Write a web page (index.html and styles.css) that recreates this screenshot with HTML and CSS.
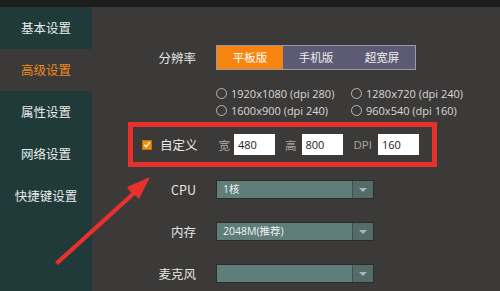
FILE: index.html
```html
<!DOCTYPE html>
<html>
<head>
<meta charset="utf-8">
<link rel="stylesheet" href="styles.css">
</head>
<body>
<div class="topbar"></div>
<div class="app">
  <nav class="sidebar">
    <div class="nav-item">基本设置</div>
    <div class="nav-item active">高级设置</div>
    <div class="nav-item">属性设置</div>
    <div class="nav-item">网络设置</div>
    <div class="nav-item">快捷键设置</div>
  </nav>
  <main class="main">
    <div class="row res-row">
      <div class="label">分辨率</div>
      <div class="seg">
        <div class="seg-btn on">平板版</div>
        <div class="seg-btn">手机版</div>
        <div class="seg-btn">超宽屏</div>
      </div>
    </div>
    <div class="radios">
      <div class="radio"><span class="circle"></span>1920x1080 (dpi 280)</div>
      <div class="radio"><span class="circle"></span>1280x720 (dpi 240)</div>
      <div class="radio"><span class="circle"></span>1600x900 (dpi 240)</div>
      <div class="radio"><span class="circle"></span>960x540 (dpi 160)</div>
    </div>
    <div class="custom">
      <span class="check"><svg width="9" height="9" viewBox="0 0 9 9"><path d="M1.5 4.8 L3.6 7 L7.6 1.8" fill="none" stroke="#fff6d8" stroke-width="1.4"/></svg></span>
      <span class="custom-label">自定义</span>
      <span class="field-label w">宽</span><span class="input">480</span>
      <span class="field-label h">高</span><span class="input">800</span>
      <span class="field-label d">DPI</span><span class="input">160</span>
    </div>
    <div class="row sel-row first">
      <div class="label">CPU</div>
      <div class="select"><span class="sel-text">1核</span><span class="sel-arrow"></span></div>
    </div>
    <div class="row sel-row">
      <div class="label">内存</div>
      <div class="select"><span class="sel-text">2048M(推荐)</span><span class="sel-arrow"></span></div>
    </div>
    <div class="row sel-row">
      <div class="label">麦克风</div>
      <div class="select"><span class="sel-text"></span><span class="sel-arrow"></span></div>
    </div>
  </main>
</div>
<svg class="pointer" width="500" height="291" viewBox="0 0 500 291">
  <path d="M55 262 L131 193 L127 187 L150 177 L139 199 L135 195 L58 265 Z" fill="#e8302e"/>
</svg>
</body>
</html>
```
FILE: styles.css
```css
* { box-sizing: border-box; }
html, body {
  margin: 0;
  padding: 0;
  width: 500px;
  height: 291px;
  overflow: hidden;
  background: #3b3a38;
  font-family: "Noto Sans CJK SC", "Noto Sans", sans-serif;
  color: #e6e6e6;
}
.topbar {
  height: 7px;
  background: #1d1d1e;
}
.app {
  display: flex;
  height: 284px;
}
.sidebar {
  width: 92px;
  background: #1f3a39;
  display: flex;
  flex-direction: column;
}
.nav-item {
  height: 42px;
  line-height: 42px;
  text-align: center;
  font-size: 12.5px;
  color: #e8ecec;
}
.nav-item.active {
  background: #3b3a38;
  color: #f08a1c;
}
.main {
  flex: 1;
  display: flex;
  flex-direction: column;
}
.row {
  display: flex;
  align-items: center;
}
.label {
  width: 104px;
  text-align: right;
  font-size: 12.5px;
  color: #e6e6e6;
  margin-right: 20px;
}
.res-row {
  margin-top: 38px;
}
.seg {
  display: flex;
  height: 25px;
  border: 1px solid #9a99a8;
  background: #5c5a74;
}
.seg-btn {
  width: 66px;
  line-height: 23px;
  text-align: center;
  font-size: 11.5px;
  color: #eeeeee;
}
.seg-btn.on {
  background: #f7840f;
  color: #fff;
}
.radios {
  margin-left: 124px;
  margin-top: 15px;
  display: grid;
  grid-template-columns: 135px 130px;
  row-gap: 0;
  font-family: "Open Sans", "Noto Sans", sans-serif;
  font-size: 11px;
  color: #d8d8d8;
}
.radio {
  display: flex;
  align-items: center;
  height: 17px;
}
.circle {
  width: 11px;
  height: 11px;
  border: 1px solid #b8b8b8;
  border-radius: 50%;
  margin-right: 4px;
}
.custom {
  margin-left: 36px;
  margin-top: 3px;
  width: 309px;
  height: 45px;
  border: 5px solid #e8302e;
  display: flex;
  align-items: center;
  padding-left: 9px;
  font-size: 12.5px;
}
.check {
  width: 10px;
  height: 10px;
  background: #e8901a;
  border: 1px solid #c27010;
  display: flex;
  align-items: center;
  justify-content: center;
}
.custom-label {
  margin-left: 8px;
  color: #ececec;
}
.field-label {
  color: #a8a8a8;
  font-size: 11.5px;
}
.field-label.w { margin-left: 21px; margin-right: 4px; }
.field-label.h { margin-left: 10px; margin-right: 5px; }
.field-label.d { margin-left: 11px; margin-right: 6px; font-family: "Open Sans", sans-serif; }
.input {
  width: 41px;
  height: 21px;
  background: #ffffff;
  color: #222;
  font-family: "Open Sans", "Noto Sans", sans-serif;
  font-size: 11px;
  line-height: 21px;
  padding-left: 4px;
}
.sel-row.first {
  margin-top: 13px;
}
.sel-row + .sel-row {
  margin-top: 23px;
}
.select {
  width: 158px;
  height: 19px;
  display: flex;
  border: 1px solid #2a2d2c;
  background: #5f7d79;
}
.sel-text {
  flex: 1;
  font-size: 10.5px;
  line-height: 17px;
  padding-left: 6px;
  color: #eef2f1;
  font-family: "Open Sans", "Noto Sans CJK SC", sans-serif;
}
.sel-arrow {
  width: 21px;
  border-left: 1px solid #3e4f4d;
  background: #536c69;
  position: relative;
}
.sel-arrow::after {
  content: "";
  position: absolute;
  left: 6px;
  top: 7px;
  border-left: 4px solid transparent;
  border-right: 4px solid transparent;
  border-top: 4px solid #a9b8b6;
}
.pointer {
  position: absolute;
  left: 0;
  top: 0;
  pointer-events: none;
}
```
